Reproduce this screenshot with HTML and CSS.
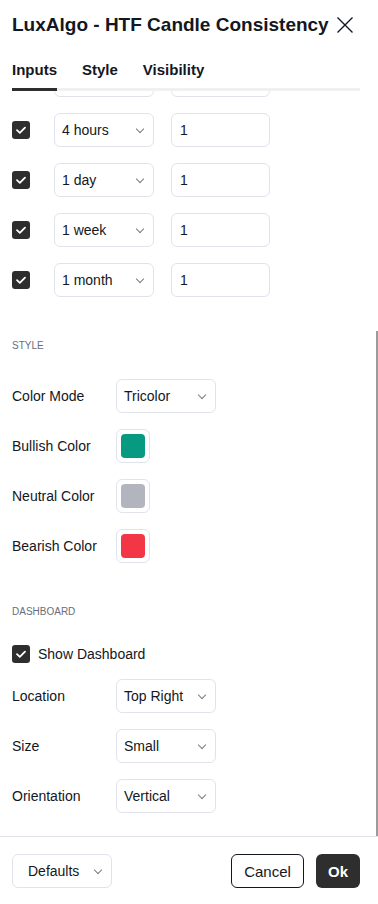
FILE: index.html
```html
<html lang="en">
<head>
    <meta charset="UTF-8">
    <meta name="viewport" content="width=device-width, initial-scale=1.0">
    <title>HTF Candle Consistency Settings</title>
    <link rel="stylesheet" href="styles.css">
</head>
<body>

    <div class="dialog">
        <div class="header">
            <div class="title">LuxAlgo - HTF Candle Consistency</div>
            <svg class="close" width="18" height="18" viewBox="0 0 18 18">
                <path d="M1.5 1.5 L16.5 16.5 M16.5 1.5 L1.5 16.5" stroke="#131722" stroke-width="1.4" fill="none"/>
            </svg>
        </div>

        <div class="tabs">
            <div class="tab tab-active">Inputs</div>
            <div class="tab">Style</div>
            <div class="tab">Visibility</div>
        </div>

        <div class="scroll">
            <div class="content">
                <!-- row above, scrolled out of view -->
                <div class="row">
                    <span class="checkbox"></span>
                    <div class="select select-tf"></div>
                    <div class="input"></div>
                </div>

                <div class="row">
                    <span class="checkbox checked"><svg width="18" height="18" viewBox="0 0 18 18"><path d="M5 9.2 L7.8 11.8 L13 6.6" stroke="#fff" stroke-width="1.8" fill="none" stroke-linecap="round" stroke-linejoin="round"/></svg></span>
                    <div class="select select-tf"><span>4 hours</span></div>
                    <div class="input">1</div>
                </div>
                <div class="row">
                    <span class="checkbox checked"><svg width="18" height="18" viewBox="0 0 18 18"><path d="M5 9.2 L7.8 11.8 L13 6.6" stroke="#fff" stroke-width="1.8" fill="none" stroke-linecap="round" stroke-linejoin="round"/></svg></span>
                    <div class="select select-tf"><span>1 day</span></div>
                    <div class="input">1</div>
                </div>
                <div class="row">
                    <span class="checkbox checked"><svg width="18" height="18" viewBox="0 0 18 18"><path d="M5 9.2 L7.8 11.8 L13 6.6" stroke="#fff" stroke-width="1.8" fill="none" stroke-linecap="round" stroke-linejoin="round"/></svg></span>
                    <div class="select select-tf"><span>1 week</span></div>
                    <div class="input">1</div>
                </div>
                <div class="row">
                    <span class="checkbox checked"><svg width="18" height="18" viewBox="0 0 18 18"><path d="M5 9.2 L7.8 11.8 L13 6.6" stroke="#fff" stroke-width="1.8" fill="none" stroke-linecap="round" stroke-linejoin="round"/></svg></span>
                    <div class="select select-tf"><span>1 month</span></div>
                    <div class="input">1</div>
                </div>

                <div class="section-title">STYLE</div>

                <div class="row">
                    <div class="label">Color Mode</div>
                    <div class="select"><span>Tricolor</span></div>
                </div>
                <div class="row">
                    <div class="label">Bullish Color</div>
                    <div class="swatch"><span class="swatch-fill bull"></span></div>
                </div>
                <div class="row">
                    <div class="label">Neutral Color</div>
                    <div class="swatch"><span class="swatch-fill neutral"></span></div>
                </div>
                <div class="row">
                    <div class="label">Bearish Color</div>
                    <div class="swatch"><span class="swatch-fill bear"></span></div>
                </div>

                <div class="section-title">DASHBOARD</div>

                <div class="row row-check">
                    <span class="checkbox checked"><svg width="18" height="18" viewBox="0 0 18 18"><path d="M5 9.2 L7.8 11.8 L13 6.6" stroke="#fff" stroke-width="1.8" fill="none" stroke-linecap="round" stroke-linejoin="round"/></svg></span>
                    <span class="check-label">Show Dashboard</span>
                </div>
                <div class="row">
                    <div class="label">Location</div>
                    <div class="select"><span>Top Right</span></div>
                </div>
                <div class="row">
                    <div class="label">Size</div>
                    <div class="select"><span>Small</span></div>
                </div>
                <div class="row">
                    <div class="label">Orientation</div>
                    <div class="select"><span>Vertical</span></div>
                </div>
            </div>
            <div class="scroll-thumb"></div>
        </div>

        <div class="footer">
            <div class="select btn-defaults"><span>Defaults</span></div>
            <div class="footer-right">
                <div class="btn btn-cancel">Cancel</div>
                <div class="btn btn-ok">Ok</div>
            </div>
        </div>
    </div>

</body>
</html>
```

FILE: styles.css
```css
/* Basic Reset */
* {
    margin: 0;
    padding: 0;
    box-sizing: border-box;
}

body {
    font-family: "Liberation Sans", Arial, sans-serif;
    color: #131722;
    background-color: #fff;
}

.dialog {
    display: flex;
    flex-direction: column;
    width: 378px;
    height: 904px;
    overflow: hidden;
}

/* Header */
.header {
    display: flex;
    align-items: center;
    justify-content: space-between;
    height: 48px;
    padding: 2px 24px 0 12px;
}

.title {
    font-size: 19px;
    font-weight: bold;
    white-space: nowrap;
}

/* Tabs */
.tabs {
    display: flex;
    gap: 25px;
    margin: 0 18px 0 12px;
    border-bottom: 3px solid #f0f0f0;
    position: relative;
    z-index: 2;
    background-color: #fff;
}

.tab {
    font-size: 15px;
    font-weight: bold;
    line-height: 20px;
    padding: 12px 0 8px;
    margin-bottom: -3px;
    border-bottom: 3px solid transparent;
}

.tab-active {
    border-bottom-color: #2e2e2e;
}

/* Scrolling content */
.scroll {
    flex: 1;
    position: relative;
    overflow: hidden;
}

.content {
    display: flex;
    flex-direction: column;
    gap: 16px;
    padding: 0 18px 0 12px;
    margin-top: -28px;
}

.scroll-thumb {
    position: absolute;
    right: 0;
    top: 240px;
    bottom: 0;
    width: 2px;
    background-color: #9b9b9b;
}

.row {
    display: flex;
    align-items: center;
    height: 34px;
}

.row-check {
    height: 18px;
}

.checkbox {
    display: flex;
    width: 18px;
    height: 18px;
    border-radius: 3px;
    border: 1px solid #b2b5be;
    flex-shrink: 0;
}

.checkbox.checked {
    background-color: #2e2e2e;
    border: none;
}

.check-label {
    font-size: 14px;
    margin-left: 8px;
}

.label {
    width: 104px;
    font-size: 14px;
}

.select {
    display: flex;
    align-items: center;
    justify-content: space-between;
    width: 100px;
    height: 34px;
    border: 1px solid #e0e3eb;
    border-radius: 6px;
    padding: 0 8px 0 7px;
    font-size: 14px;
}

.select::after {
    content: "";
    width: 5px;
    height: 5px;
    margin: -3px 2px 0 auto;
    border-right: 1.3px solid #787b86;
    border-bottom: 1.3px solid #787b86;
    transform: rotate(45deg);
}

.select-tf {
    margin-left: 24px;
}

.input {
    display: flex;
    align-items: center;
    width: 99px;
    height: 34px;
    margin-left: 17px;
    border: 1px solid #e0e3eb;
    border-radius: 6px;
    padding: 0 8px;
    font-size: 14px;
}

.swatch {
    width: 34px;
    height: 34px;
    border: 1px solid #e0e3eb;
    border-radius: 6px;
    padding: 4px;
}

.swatch-fill {
    display: block;
    width: 24px;
    height: 24px;
    border-radius: 4px;
}

.bull {
    background-color: #089981;
}

.neutral {
    background-color: #b2b5be;
}

.bear {
    background-color: #f23645;
}

.section-title {
    margin: 25px 0 9px;
    font-size: 10px;
    line-height: 16px;
    color: #6a6d78;
}

/* Footer */
.footer {
    display: flex;
    align-items: center;
    justify-content: space-between;
    border-top: 1px solid #e0e3eb;
    padding: 17px 18px 16px 12px;
}

.btn-defaults {
    padding: 0 8px 0 15px;
}

.footer-right {
    display: flex;
    gap: 12px;
}

.btn {
    display: flex;
    align-items: center;
    justify-content: center;
    height: 34px;
    border-radius: 6px;
    font-size: 15px;
}

.btn-cancel {
    width: 73px;
    border: 1px solid #131722;
}

.btn-ok {
    width: 44px;
    background-color: #2e2e2e;
    color: #fff;
    font-weight: bold;
}
```
